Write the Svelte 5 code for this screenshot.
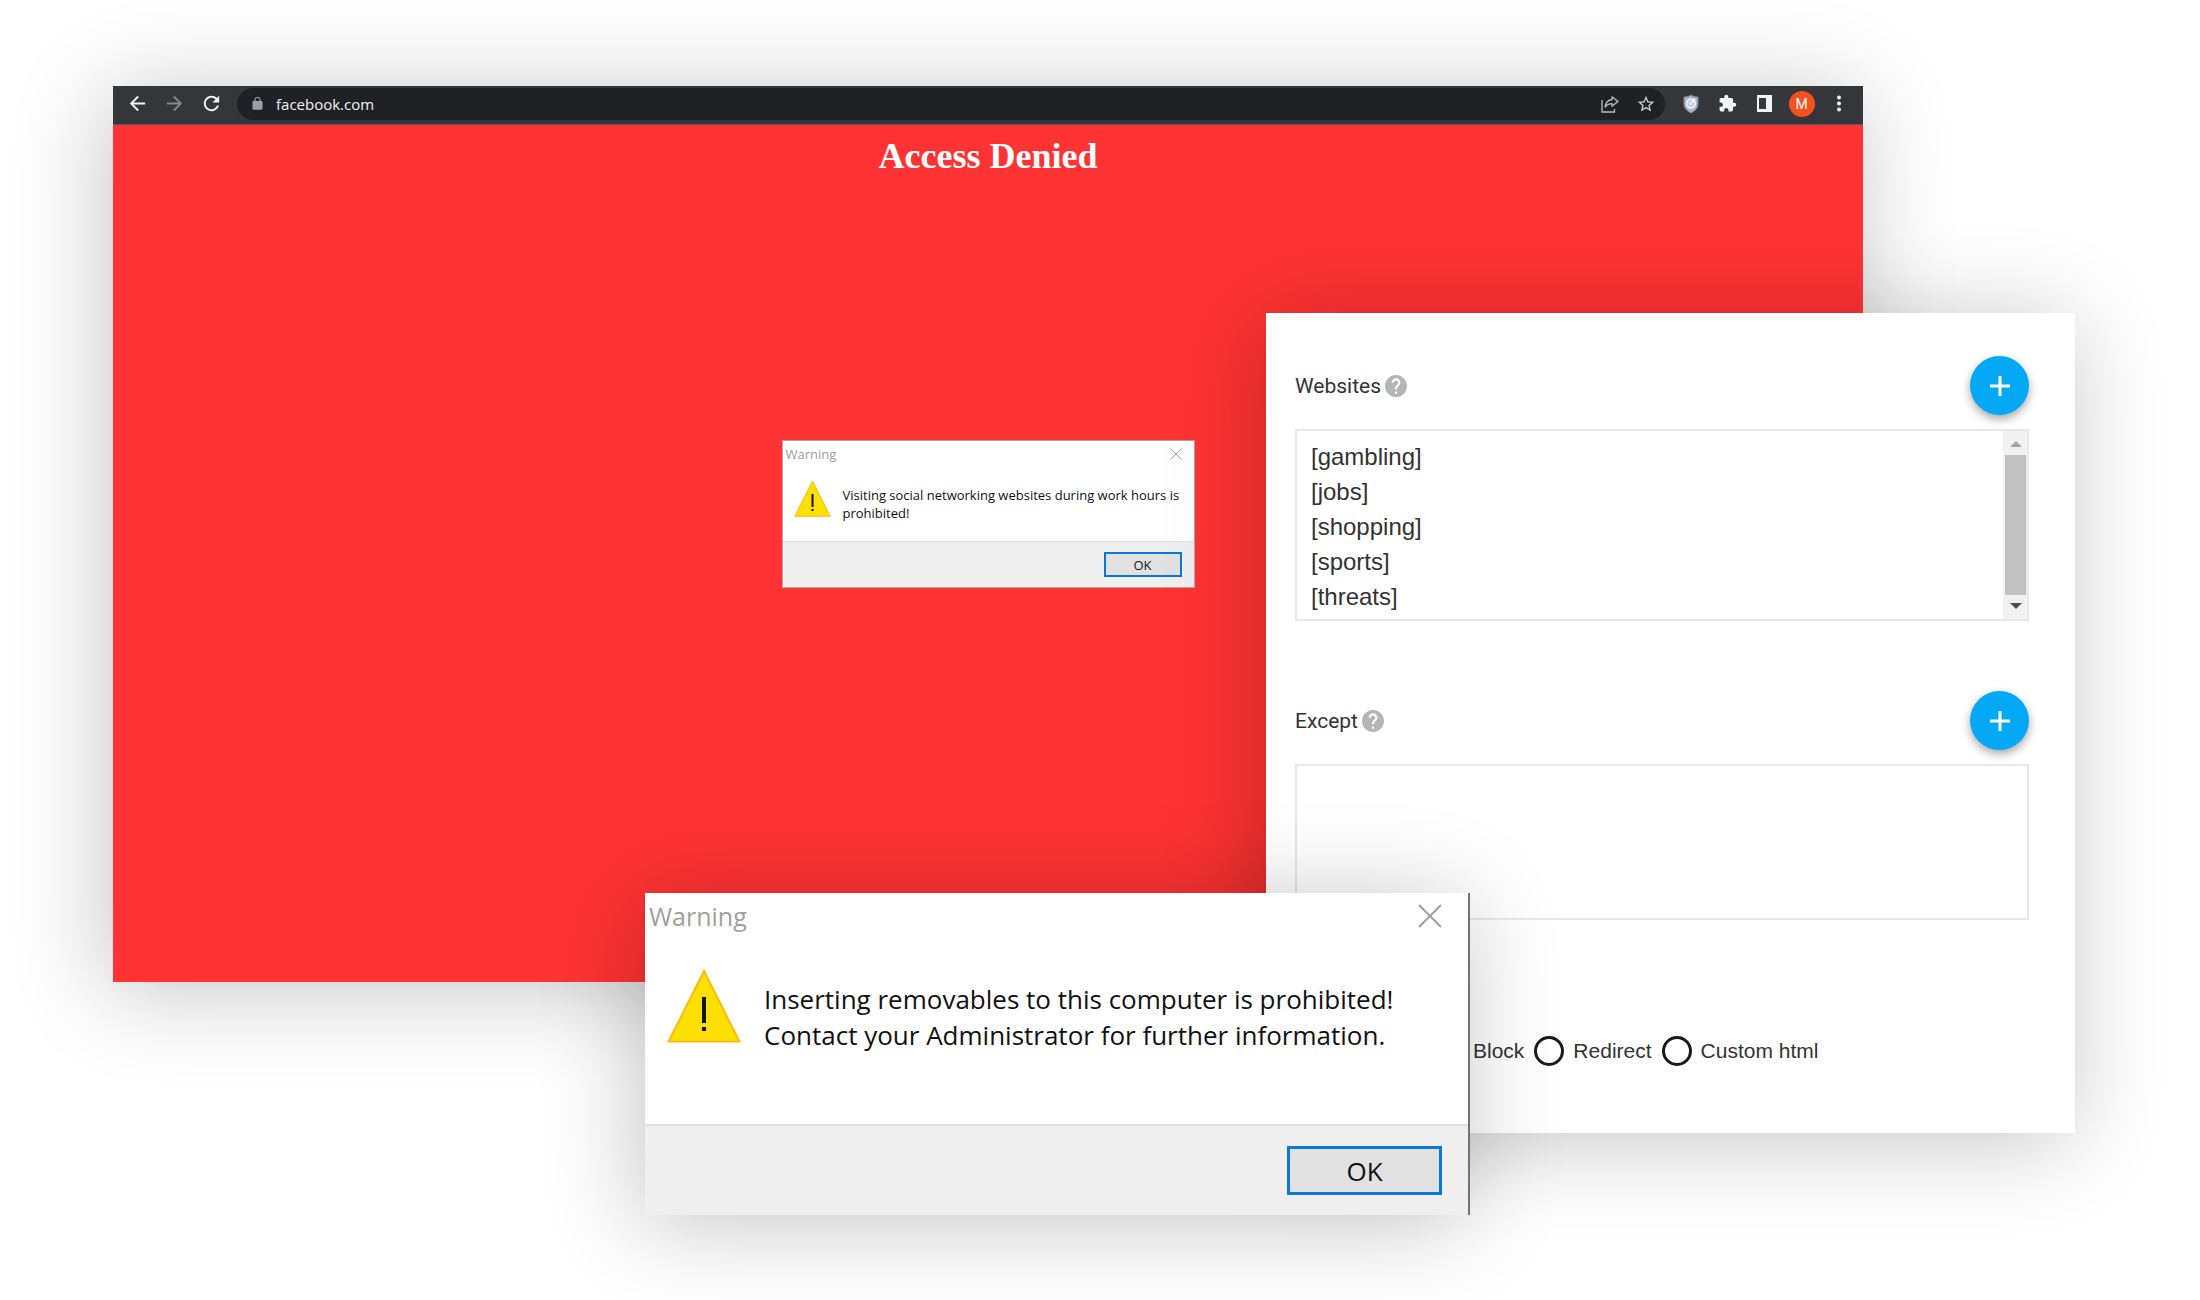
<script>
  const categories = ['[gambling]', '[jobs]', '[shopping]', '[sports]', '[threats]'];
  let websites = $state(categories.join('\n'));
  let exceptions = $state('');
</script>

{#snippet dialog(size, lines)}
  <section class="dialog {size}" role="alertdialog" aria-label="Warning">
    <header>
      <h2>Warning</h2>
      <button class="close" aria-label="Close">
        <svg viewBox="0 0 24 24"><path d="M1 1 23 23M23 1 1 23" /></svg>
      </button>
    </header>
    <div class="message">
      <svg class="sign" viewBox="0 0 74 74">
        <path d="M37 2 72.500 72.500H1.500Z" fill="#fee000" stroke="#ffb914" stroke-width="2" />
        <path d="M35 28h4v26h-4zM35 58h4v4h-4z" fill="#111" />
      </svg>
      <p>
        {#each lines as line}<span>{line}</span>{/each}
      </p>
    </div>
    <footer><button class="ok">OK</button></footer>
  </section>
{/snippet}

{#snippet heading(text, target)}
  <div class="heading">
    <label for={target}>{text}</label>
    <svg class="help" viewBox="2 2 20 20" aria-hidden="true">
      <path d="M12 2C6.480 2 2 6.480 2 12s4.480 10 10 10 10-4.480 10-10S17.520 2 12 2zm1 17h-2v-2h2v2zm2.070-7.750l-.9.920C13.450 12.900 13 13.500 13 15h-2v-.5c0-1.100.450-2.100 1.170-2.830l1.240-1.260c.370-.360.590-.860.590-1.410 0-1.100-.9-2-2-2s-2 .9-2 2H8c0-2.210 1.790-4 4-4s4 1.790 4 4c0 .880-.360 1.680-.930 2.250z" />
    </svg>
    <button class="add" aria-label="Add to {text}">
      <svg viewBox="0 0 22 22"><path d="M11 1v20M1 11h20" /></svg>
    </button>
  </div>
{/snippet}

<main class="desktop">
  <section class="browser">
    <nav class="toolbar">
      <button aria-label="Back">
        <svg width="23" height="23" viewBox="0 0 24 24"><path fill="#f1f3f4" d="M20 11H7.830l5.590-5.590L12 4l-8 8 8 8 1.410-1.410L7.830 13H20v-2z" /></svg>
      </button>
      <button aria-label="Forward">
        <svg width="23" height="23" viewBox="0 0 24 24"><path fill="#85878a" d="M4 11h12.170l-5.590-5.590L12 4l8 8-8 8-1.410-1.410L16.170 13H4v-2z" /></svg>
      </button>
      <button aria-label="Reload">
        <svg width="23" height="23" viewBox="0 0 24 24"><path fill="#f1f3f4" d="M17.650 6.350C16.200 4.900 14.210 4 12 4c-4.420 0-7.990 3.580-7.990 8s3.570 8 7.990 8c3.730 0 6.840-2.550 7.730-6h-2.080c-.820 2.330-3.040 4-5.650 4-3.310 0-6-2.690-6-6s2.690-6 6-6c1.660 0 3.140.690 4.220 1.780L13 11h7V4l-2.350 2.350z" /></svg>
      </button>
      <div class="address">
        <svg width="15" height="15" viewBox="0 0 24 24"><path fill="#9aa0a6" d="M18 8h-1V6c0-2.760-2.240-5-5-5S7 3.240 7 6v2H6c-1.100 0-2 .9-2 2v10c0 1.100.9 2 2 2h12c1.100 0 2-.9 2-2V10c0-1.100-.9-2-2-2zm-2.900 0H8.900V6c0-1.710 1.390-3.100 3.100-3.100 1.710 0 3.100 1.390 3.100 3.100v2z" /></svg>
        <input aria-label="Address" value="facebook.com" />
        <button aria-label="Share">
          <svg width="18" height="18" viewBox="0 0 18 18" fill="none" stroke="#b9bcc0" stroke-width="1.300">
            <path d="M1 5v12h12.500v-3" />
            <path d="M11 1.800 17 6.500l-6 4.800V8.600C8 8.600 6 9.500 4.200 12 4.600 8 7 5 11 4.500Z" stroke-linejoin="round" />
          </svg>
        </button>
        <button aria-label="Bookmark">
          <svg width="20" height="20" viewBox="0 0 24 24"><path fill="#c9cbce" d="M22 9.240l-7.190-.620L12 2 9.190 8.630 2 9.240l5.460 4.730L5.820 21 12 17.270 18.180 21l-1.630-7.030L22 9.240zM12 15.400l-3.760 2.270 1-4.280-3.320-2.880 4.380-.380L12 6.100l1.710 4.040 4.380.380-3.320 2.880 1 4.280L12 15.400z" /></svg>
        </button>
      </div>
      <button aria-label="Shield">
        <svg width="16" height="20" viewBox="0 0 16 20">
          <path d="M8 1c2 1.500 4.500 2 7 2v7c0 4-3 7-7 9-4-2-7-5-7-9V3c2.500 0 5-.5 7-2Z" fill="#aab4c6" stroke="#7c889e" />
          <circle cx="8" cy="9.500" r="4.500" fill="#c5ccd8" stroke="#f4f6f9" stroke-width="1.400" />
          <circle cx="8" cy="9.500" r="1.800" fill="#dfe4ea" />
          <path d="m9 8 3-3" stroke="#fff" stroke-width="1.400" />
        </svg>
      </button>
      <button aria-label="Extensions">
        <svg width="19" height="19" viewBox="0 0 24 24"><path fill="#f1f3f4" d="M20.500 11H19V7c0-1.100-.9-2-2-2h-4V3.500C13 2.120 11.880 1 10.500 1S8 2.120 8 3.500V5H4c-1.100 0-1.990.9-1.990 2v3.800H3.500c1.490 0 2.700 1.210 2.700 2.700s-1.210 2.700-2.700 2.700H2V20c0 1.100.9 2 2 2h3.800v-1.500c0-1.490 1.210-2.700 2.700-2.700 1.490 0 2.700 1.210 2.700 2.700V22H17c1.100 0 2-.9 2-2v-4h1.500c1.380 0 2.500-1.120 2.500-2.500S21.880 11 20.500 11z" /></svg>
      </button>
      <button aria-label="Side panel">
        <svg width="17" height="17" viewBox="0 0 17 17"><path fill="#f1f3f4" fill-rule="evenodd" d="M1 0h15v17H1zM3 3v11h7V3z" /></svg>
      </button>
      <button aria-label="Profile"><span class="avatar">M</span></button>
      <button aria-label="Menu">
        <svg width="6" height="17" viewBox="0 0 6 17" fill="#f1f3f4"><circle cx="3" cy="2.500" r="2" /><circle cx="3" cy="8.500" r="2" /><circle cx="3" cy="14.500" r="2" /></svg>
      </button>
    </nav>
    <div class="blocked">
      <h1>Access Denied</h1>
      {@render dialog('small', ['Visiting social networking websites during work hours is', 'prohibited!'])}
    </div>
  </section>

  <form class="panel">
    {@render heading('Websites', 'websites')}
    <div class="box filled">
      <textarea id="websites" rows="5" bind:value={websites}></textarea>
      <div class="scrollbar" aria-hidden="true">
        <svg viewBox="0 0 12 6"><path fill="#a3a3a3" d="M6 0l6 6H0z" /></svg>
        <div class="thumb"></div>
        <svg viewBox="0 0 12 6"><path fill="#505050" d="M0 0h12L6 6z" /></svg>
      </div>
    </div>
    {@render heading('Except', 'except')}
    <div class="box empty">
      <textarea id="except" bind:value={exceptions}></textarea>
    </div>
    <div class="actions">
      {#each ['Block', 'Redirect', 'Custom html'] as action}
        <label><input type="radio" name="action" value={action} />{action}</label>
      {/each}
    </div>
  </form>

  <div class="front">
    {@render dialog('large', ['Inserting removables to this computer is prohibited!', 'Contact your Administrator for further information.'])}
  </div>
</main>

<style>
  :global(body) {
    margin: 0;
    background: #fff;
  }

  .desktop {
    --lift: -6px 8px 90px rgba(0, 0, 0, 0.23);
    --ui: 'Open Sans', 'Noto Sans', sans-serif;
    position: relative;
    box-sizing: border-box;
    min-height: 100vh;
    padding: 86px 337px 85px 113px;
    overflow: hidden;
  }

  h1,
  h2,
  p {
    margin: 0;
  }

  button {
    display: flex;
    align-items: center;
    justify-content: center;
    padding: 0;
    border: 0;
    background: none;
    color: inherit;
    cursor: pointer;
  }

  .browser {
    display: flex;
    flex-direction: column;
    min-height: 896px;
    background: #f33;
    box-shadow: var(--lift);
  }

  .toolbar {
    display: flex;
    align-items: center;
    gap: 14px;
    box-sizing: border-box;
    height: 39px;
    padding: 0 13px 3px;
    border-bottom: 1px solid #4a6063;
    background: #35363a;
  }

  .toolbar > button {
    width: 23px;
  }

  .address {
    flex: 1;
    display: flex;
    align-items: center;
    gap: 17px;
    height: 32px;
    padding: 0 9px 0 13px;
    border-radius: 16px;
    background: #202124;
  }

  .address input {
    flex: 1;
    min-width: 0;
    margin-left: -6px;
    padding: 0;
    border: 0;
    outline: 0;
    background: none;
    color: #f1f3f4;
    font: 15px/20px var(--ui);
  }

  .avatar {
    flex: none;
    width: 26px;
    height: 26px;
    border-radius: 50%;
    background: #f4511e;
    color: #fff;
    font: 14px/26px Roboto, sans-serif;
  }

  .blocked {
    display: flex;
    flex-direction: column;
    align-items: center;
    gap: 263px;
    padding-top: 10px;
  }

  h1 {
    color: #fff;
    font: bold 36px/42px 'Liberation Serif', serif;
  }

  .dialog {
    box-sizing: border-box;
    background: #fff;
    color: #111;
    font-family: var(--ui);
  }

  .dialog header {
    display: flex;
    align-items: center;
    justify-content: space-between;
  }

  .dialog h2 {
    color: #a0a0a0;
    font-weight: 400;
  }

  .close path {
    fill: none;
    stroke: #a0a0a0;
    stroke-width: 2;
  }

  .message {
    display: flex;
    align-items: flex-start;
  }

  .message span {
    display: block;
    white-space: nowrap;
  }

  .dialog footer {
    display: flex;
    justify-content: flex-end;
    background: #efefef;
  }

  .ok {
    box-sizing: border-box;
    border: solid #0a78d7;
    background: #e1e1e1;
    font-family: inherit;
  }

  .small {
    width: 413px;
    border: 1px solid #b4a4a4;
    font-size: 13px;
    line-height: 18px;
  }

  .small header {
    height: 26px;
    padding: 0 12px 0 3px;
  }

  .small h2 {
    font-size: 13px;
  }

  .small .close svg {
    width: 12px;
    height: 12px;
  }

  .small .message {
    gap: 12px;
    padding: 13px 10px 19px 11px;
  }

  .small .sign {
    width: 37px;
    height: 37px;
  }

  .small p {
    padding-top: 6px;
  }

  .small footer {
    padding: 10px 12px;
    border-top: 1px solid #dfdfdf;
  }

  .small .ok {
    width: 78px;
    height: 25px;
    border-width: 2px;
    font-size: 13px;
  }

  .front {
    position: absolute;
    top: 893px;
    left: 645px;
    box-shadow: var(--lift);
  }

  .large {
    width: 825px;
    border-right: 2px solid #77726f;
    font-size: 26px;
    line-height: 36px;
  }

  .large header {
    height: 46px;
    padding: 0 26px 0 4px;
  }

  .large h2 {
    font-size: 25px;
  }

  .large .close svg {
    width: 24px;
    height: 24px;
  }

  .large .message {
    gap: 23px;
    padding: 30px 22px 71px;
  }

  .large .sign {
    width: 74px;
    height: 74px;
  }

  .large p {
    padding-top: 12px;
  }

  .large footer {
    padding: 20px 26px;
    border-top: 2px solid #e0e0e0;
  }

  .large .ok {
    width: 155px;
    height: 49px;
    border-width: 3px;
    font-size: 26px;
  }

  .panel {
    position: absolute;
    top: 313px;
    right: 125px;
    box-sizing: border-box;
    width: 809px;
    padding: 43px 46px 67px 29px;
    background: #fff;
    box-shadow: var(--lift);
    color: #333;
  }

  .heading {
    display: flex;
    align-items: center;
    gap: 4px;
    font: 21px/24px Roboto, sans-serif;
  }

  .help {
    width: 22px;
    height: 22px;
    fill: #b5b5b5;
  }

  .add {
    width: 59px;
    height: 59px;
    margin-left: auto;
    border-radius: 50%;
    background: #03a9f4;
    box-shadow: 0 4px 10px rgba(0, 0, 0, 0.35);
  }

  .add svg {
    width: 22px;
    height: 22px;
    stroke: #fff;
    stroke-width: 3;
  }

  .box {
    display: flex;
    margin-top: 14px;
    border: 2px solid #e8e8e8;
  }

  .filled {
    margin-bottom: 70px;
  }

  textarea {
    flex: 1;
    box-sizing: border-box;
    min-width: 0;
    padding: 8px 14px 5px;
    border: 0;
    outline: 0;
    resize: none;
    overflow: hidden;
    background: none;
    color: #333;
    font: 24px/35px 'Liberation Sans', sans-serif;
  }

  .empty textarea {
    height: 152px;
  }

  .scrollbar {
    display: flex;
    flex-direction: column;
    align-items: center;
    gap: 8px;
    width: 21px;
    padding: 10px 1px 10px 2px;
    background: #f1f1f1;
  }

  .scrollbar svg {
    width: 12px;
    height: 6px;
  }

  .thumb {
    flex: 1;
    align-self: stretch;
    background: #c1c1c1;
  }

  .actions {
    display: flex;
    gap: 10px;
    margin: 116px 0 0 139px;
  }

  .actions label {
    display: flex;
    align-items: center;
    gap: 9px;
    font: 21px/30px 'Liberation Sans', sans-serif;
  }

  .actions input {
    appearance: none;
    box-sizing: border-box;
    width: 30px;
    height: 30px;
    margin: 0;
    border: 3px solid #1a1a1a;
    border-radius: 50%;
  }

  .actions input:checked {
    background: radial-gradient(#1a1a1a 45%, transparent 50%);
  }
</style>
